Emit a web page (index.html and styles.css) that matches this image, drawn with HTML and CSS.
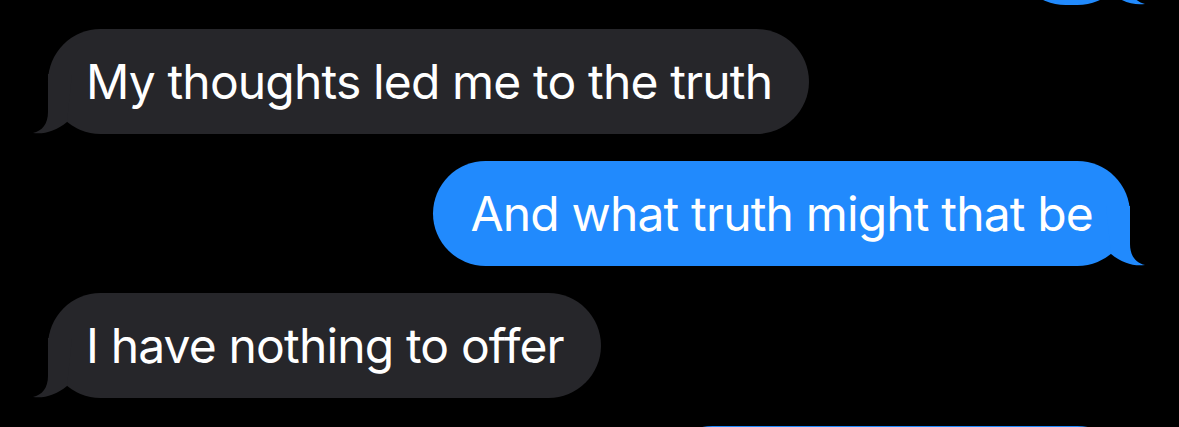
FILE: index.html
```html
<!DOCTYPE html>
<html lang="en">
<head>
<meta charset="utf-8">
<title>Messages</title>
<link rel="stylesheet" href="styles.css">
</head>
<body>
<div class="thread">
  <div class="msg out first short">
    <svg class="tail" viewBox="0 0 60 60" width="60" height="60"><path d="M16 0 L16 38 C16 50 10 57 1 59 C12 60.5 24 57 35 48 L40 0 Z"/></svg>
  </div>
  <div class="msg in after-first">
    <span class="text">My thoughts led me to the truth</span>
    <svg class="tail" viewBox="0 0 60 60" width="60" height="60"><path d="M16 0 L16 38 C16 50 10 57 1 59 C12 60.5 24 57 35 48 L40 0 Z"/></svg>
  </div>
  <div class="msg out">
    <span class="text">And what truth might that be</span>
    <svg class="tail" viewBox="0 0 60 60" width="60" height="60"><path d="M16 0 L16 38 C16 50 10 57 1 59 C12 60.5 24 57 35 48 L40 0 Z"/></svg>
  </div>
  <div class="msg in">
    <span class="text">I have nothing to offer</span>
    <svg class="tail" viewBox="0 0 60 60" width="60" height="60"><path d="M16 0 L16 38 C16 50 10 57 1 59 C12 60.5 24 57 35 48 L40 0 Z"/></svg>
  </div>
  <div class="msg out last"></div>
</div>
</body>
</html>
```

FILE: styles.css
```css
html, body {
  margin: 0;
  padding: 0;
  background: #000;
  height: 100%;
  overflow: hidden;
}

.thread {
  display: flex;
  flex-direction: column;
  gap: 27px;
}

.msg {
  position: relative;
  box-sizing: border-box;
  height: 105px;
  flex: none;
  display: flex;
  align-items: center;
  padding: 0 37px 0 38px;
  border-radius: 53px;
  font-family: "Inter", "Noto Sans", sans-serif;
  font-size: 48px;
  letter-spacing: -0.85px;
  color: #fff;
  white-space: nowrap;
}

.msg .text {
  position: relative;
  z-index: 1;
}

.msg.in {
  align-self: flex-start;
  margin-left: 48px;
  background: #26262a;
  fill: #26262a;
}

.msg.out {
  align-self: flex-end;
  margin-right: 49px;
  background: #218afd;
  fill: #218afd;
}

.msg.first {
  margin-top: -100px;
}

.msg.short {
  width: 117px;
}

.msg.after-first {
  margin-top: -3px;
}

.msg.last {
  width: 470px;
  margin-top: 1px;
}

.tail {
  position: absolute;
  bottom: 0;
  z-index: 0;
}

.msg.in .tail {
  left: -16px;
}

.msg.out .tail {
  right: -16px;
  transform: scaleX(-1);
}
```
